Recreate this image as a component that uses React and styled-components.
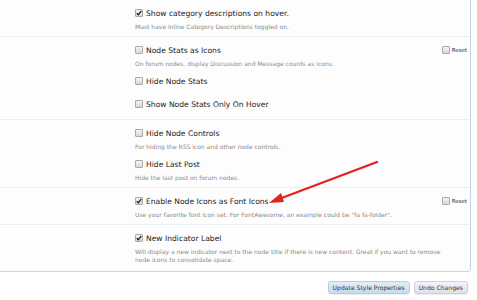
import React from 'react';
import styled, { createGlobalStyle } from 'styled-components';

const GlobalStyle = createGlobalStyle`
  html, body {
    margin: 0;
    padding: 0;
    background: #fff;
    width: 477px;
    height: 300px;
    overflow: hidden;
  }
  body {
    font-family: "DejaVu Sans", Verdana, sans-serif;
  }
`;

const Page = styled.div`
  position: relative;
  width: 477px;
  height: 300px;
`;

const Panel = styled.div`
  width: 470px;
  border-right: 1px solid #c3d5de;
  border-bottom: 1px solid #c6dadd;
  border-bottom-right-radius: 4px;
  background: #fdfdfe;
`;

const Section = styled.div`
  display: grid;
  grid-template-columns: 135px 1fr;
  padding: 7px 0 ${p => (p.last ? '7px' : '5px')};
  border-top: ${p => (p.first ? 'none' : '1px solid #e6eff3')};
`;

const Options = styled.div`
  display: flex;
  flex-direction: column;
  gap: 7px;
  padding-right: 3px;
`;

const Option = styled.div`
  display: flex;
  flex-direction: column;
  padding-bottom: ${p => (p.bare ? '4px' : '0')};
`;

const LabelRow = styled.div`
  display: flex;
  align-items: center;
  height: 12px;
`;

const Label = styled.span`
  font-size: 7.6px;
  color: #222;
  margin-left: 3px;
  white-space: nowrap;
`;

const Box = styled.span`
  box-sizing: border-box;
  width: 8px;
  height: 8px;
  border: 1px solid #a9a9a9;
  border-radius: 1px;
  background: linear-gradient(#f4f4f4, #d8d8d8);
  display: inline-flex;
  align-items: center;
  justify-content: center;
  flex-shrink: 0;
`;

const Reset = styled.div`
  margin-left: auto;
  display: flex;
  align-items: center;
  gap: 2px;
  font-size: 5.5px;
  color: #333;
`;

const Hint = styled.div`
  margin-top: 4px;
  padding-right: 16px;
  font-size: 6px;
  line-height: 8px;
  color: #8a8a8a;
`;

const Buttons = styled.div`
  display: flex;
  justify-content: flex-end;
  gap: 4px;
  padding: 9px 9px 0 0;
`;

const Button = styled.button`
  border: 1px solid #b9cfdf;
  border-radius: 3px;
  font-family: inherit;
  font-size: 6.1px;
  color: #333;
  height: 13px;
  padding: 0 4px;
  background: linear-gradient(#e3eef7, #c6dbec);
  box-shadow: 0 1px 1px rgba(0, 0, 0, 0.08);
`;

const SecondaryButton = styled(Button)`
  border-color: #cfcfdc;
  background: linear-gradient(#f3f3f8, #e0e0ea);
`;

const Arrow = styled.svg`
  position: absolute;
  left: 0;
  top: 0;
  pointer-events: none;
`;

const Check = ({ checked }) => (
  <Box>
    {checked ? (
      <svg width="6" height="6" viewBox="0 0 6 6">
        <path d="M0.8 3.2 L2.3 4.8 L5.3 1" stroke="#222" strokeWidth="1.3" fill="none" />
      </svg>
    ) : null}
  </Box>
);

const Item = ({ label, hint, checked, reset }) => (
  <Option bare={!hint}>
    <LabelRow>
      <Check checked={checked} />
      <Label>{label}</Label>
      {reset ? (
        <Reset>
          <Check />
          Reset
        </Reset>
      ) : null}
    </LabelRow>
    {hint ? <Hint>{hint}</Hint> : null}
  </Option>
);

const sections = [
  [
    { label: 'Show category descriptions on hover.', hint: 'Must have Inline Category Descriptions toggled on.', checked: true },
  ],
  [
    { label: 'Node Stats as Icons', hint: 'On forum nodes, display Discussion and Message counts as icons.', reset: true },
    { label: 'Hide Node Stats' },
    { label: 'Show Node Stats Only On Hover' },
  ],
  [
    { label: 'Hide Node Controls', hint: 'For hiding the RSS icon and other node controls.' },
    { label: 'Hide Last Post', hint: 'Hide the last post on forum nodes.' },
  ],
  [
    { label: 'Enable Node Icons as Font Icons', hint: 'Use your favorite font icon set. For FontAwesome, an example could be "fa fa-folder".', checked: true, reset: true },
  ],
  [
    { label: 'New Indicator Label', hint: 'Will display a new indicator next to the node title if there is new content. Great if you want to remove node icons to consolidate space.', checked: true },
  ],
];

const App = () => (
  <Page>
    <GlobalStyle />
    <Panel>
      {sections.map((items, i) => (
        <Section key={i} first={i === 0} last={i === sections.length - 1}>
          <div />
          <Options>
            {items.map(item => (
              <Item key={item.label} {...item} />
            ))}
          </Options>
        </Section>
      ))}
    </Panel>
    <Buttons>
      <Button>Update Style Properties</Button>
      <SecondaryButton>Undo Changes</SecondaryButton>
    </Buttons>
    <Arrow width="477" height="300">
      <line x1="377" y1="162" x2="279" y2="199" stroke="#e2231f" strokeWidth="2.4" strokeLinecap="round" />
      <polygon points="269,203 281,193 284,202" fill="#e2231f" />
    </Arrow>
  </Page>
);

export default App;
